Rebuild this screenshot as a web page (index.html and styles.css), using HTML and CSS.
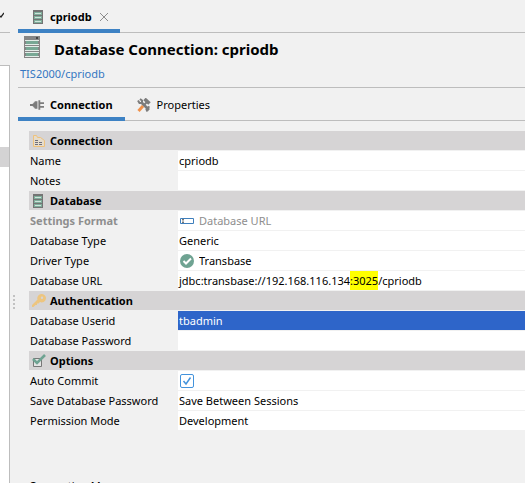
FILE: index.html
```html
<!DOCTYPE html>
<html lang="en">
<head>
<meta charset="utf-8">
<title>Database Connection: cpriodb</title>
<link rel="stylesheet" href="styles.css">
</head>
<body>
<svg class="sprite" aria-hidden="true">
  <symbol id="server" viewBox="0 0 10 14">
    <path fill="#747474" d="M0 0h10v14H0z"/>
    <path fill="#7fae9b" d="M1 2h8v3H1zM1 6h8v3H1zM1 10h8v3H1z"/>
    <path fill="#cfe3da" d="M2 3h6v1H2zM2 7h6v1H2zM2 11h6v1H2z"/>
  </symbol>
</svg>
<div class="app">
  <aside class="side">
    <div class="side-tab"><svg class="side-check" viewBox="0 0 4 6"><path d="M0 4l1 1 3-4" fill="none" stroke="#222" stroke-width="1.3"/></svg></div>
    <div class="side-tools"></div>
    <div class="tree"><div class="tree-selected"></div></div>
  </aside>
  <div class="splitter"><i></i><i></i><i></i><i></i></div>
  <main class="editor">
    <nav class="file-tabs">
      <div class="file-tab">
        <svg class="icon-server"><use href="#server"/></svg>
        <a href="#editor">cpriodb</a>
        <button class="close" type="button" aria-label="Close"><svg viewBox="0 0 8 8"><path d="M0 0l8 8M8 0L0 8" stroke="#8c8c8c" fill="none"/></svg></button>
      </div>
    </nav>
    <header class="heading" id="editor">
      <div class="title">
        <svg class="title-icon" viewBox="0 0 16 22">
          <path fill="#858585" d="M0 0h16v22H0z"/>
          <path fill="#e3ece8" d="M1 4h14v1H1zM1 8h14v1H1zM1 10h14v1H1zM1 14h14v1H1zM1 16h14v1H1zM1 20h14v1H1z"/>
          <path fill="#78a895" d="M2 5h12v3H2zM2 11h12v3H2zM2 17h12v3H2z"/>
          <path fill="#444" d="M12 1h2v2h-2z"/>
        </svg>
        <h1>Database Connection: cpriodb</h1>
      </div>
      <a class="path" href="#editor">TIS2000/cpriodb</a>
    </header>
    <nav class="tabs">
      <a class="tab active" href="#connection">
        <svg class="icon" viewBox="0 0 15 14"><path fill="#7c7c7c" d="M0 6h3V5h1V4h1V3h3v8H5v-1H4V9H3V8H0zM9 2h2v10H9zM11 4h4v2h-4zM11 8h4v2h-4z"/></svg>
        Connection
      </a>
      <a class="tab" href="#properties">
        <svg class="icon" viewBox="0 0 14 14"><path fill="none" stroke="#7c7c7c" stroke-width="2.6" d="M4 4l8 8"/><path fill="none" stroke="#7c7c7c" stroke-width="2" d="M1 2.500l1.500 2.500H5V2.500L3 1M12.500 8.500l-1.500 1-1.500 2 1 2"/><path stroke="#7c7c7c" stroke-width="3.600" d="M7.500 1l5 4.500"/><path stroke="#7c7c7c" stroke-width="2" d="M10 4L6 8"/><path stroke="#f0914a" stroke-width="3" d="M6 8l-4.500 5"/></svg>
        Properties
      </a>
    </nav>
    <form class="grid" id="connection">
      <h2><svg class="icon" viewBox="0 0 14 14"><path fill="#e6dccb" stroke="#efc27c" d="M1.500 12.500v-11h3l1 2h3l4 3v6z"/><path stroke="#6f6f7c" stroke-dasharray="3 1" d="M3 6.500h4M3 8.500h7M3 10.500h8"/></svg>Connection</h2>
      <div class="row"><label for="name">Name</label><input id="name" type="text" value="cpriodb"></div>
      <div class="row"><label for="notes">Notes</label><input id="notes" type="text"></div>

      <h2><svg class="icon-server"><use href="#server"/></svg>Database</h2>
      <div class="row disabled"><label for="format">Settings Format</label><div class="value"><svg class="icon" viewBox="0 0 14 14"><path fill="#fff" stroke="#3f7fbc" d="M.5 4.500h13v5H.5z"/><path stroke="#777" d="M2 5.500h2M3 5.500v3M2 8.500h2" fill="none"/></svg><select id="format" disabled><option>Database URL</option></select></div></div>
      <div class="row"><label for="type">Database Type</label><select id="type"><option>Generic</option></select></div>
      <div class="row"><label for="driver">Driver Type</label><div class="value"><svg class="icon" viewBox="0 0 14 14"><circle cx="7" cy="7" r="7" fill="#6fa392"/><path d="M3.500 7l2.500 2.500 5-5" fill="none" stroke="#fff" stroke-width="2"/></svg><select id="driver"><option>Transbase</option></select></div></div>
      <div class="row"><span id="url-label">Database URL</span><div class="value url" role="textbox" contenteditable="true" spellcheck="false" aria-labelledby="url-label">jdbc:transbase://192.168.116.134<mark>:3025</mark>/cpriodb</div></div>

      <h2><svg class="icon" viewBox="0 0 14 14"><path fill="#edc57f" fill-rule="evenodd" d="M9.500 0a4.200 4.200 0 1 1-1.500 8L6.500 9.500H5V11H3.500l-2 2H0v-2l5.500-5.500A4.200 4.200 0 0 1 9.500 0zM10 2.500a1.200 1.200 0 1 0 0 2.400 1.200 1.200 0 0 0 0-2.400z"/></svg>Authentication</h2>
      <div class="row selected"><label for="user">Database Userid</label><input id="user" type="text" value="tbadmin"></div>
      <div class="row"><label for="password">Database Password</label><input id="password" type="password"></div>

      <h2><svg class="icon" viewBox="0 0 14 14"><path fill="#e4e4e4" stroke="#777" d="M1.500 4.500h8v8h-8z"/><path d="M1 5l4 4 8-8" fill="none" stroke="#6fa392" stroke-width="2.600"/></svg>Options</h2>
      <div class="row"><label for="auto">Auto Commit</label><div class="value"><input id="auto" type="checkbox" checked></div></div>
      <div class="row"><label for="save">Save Database Password</label><select id="save"><option>Save Between Sessions</option></select></div>
      <div class="row"><label for="mode">Permission Mode</label><select id="mode"><option>Development</option></select></div>
    </form>
    <footer class="message">Connection Message</footer>
  </main>
</div>
</body>
</html>
```

FILE: styles.css
```css
* {
  box-sizing: border-box;
}

body {
  margin: 0;
  height: 100vh;
  overflow: hidden;
  background: #f1f1f1;
  color: #000;
  font: 11px/20px "Noto Sans", "Open Sans", sans-serif;
}

a {
  color: inherit;
  text-decoration: none;
}

h1,
h2 {
  margin: 0;
}

.sprite {
  position: absolute;
  width: 0;
  height: 0;
}

.app {
  display: flex;
  height: 100%;
}

.side {
  display: flex;
  flex-direction: column;
  width: 10px;
}

.side-tab {
  height: 33px;
  padding-top: 9px;
  border-bottom: 1px solid #bdbdbd;
}

.side-check {
  display: block;
  width: 4px;
  height: 12px;
}

.side-tools {
  height: 32px;
}

.tree {
  flex: 1;
  padding-top: 81px;
  background: #fff;
  border: solid #bdbdbd;
  border-width: 1px 1px 0 0;
}

.tree-selected {
  height: 20px;
  background: #d4d3d4;
}

.splitter {
  display: flex;
  flex-direction: column;
  gap: 2px;
  width: 8px;
  padding: 295px 0 0 3px;
}

.splitter i {
  width: 2px;
  height: 2px;
  background: #c2c2c2;
}

.editor {
  flex: 1;
  min-width: 0;
}

.icon {
  flex: none;
  width: 14px;
  height: 14px;
}

.icon-server {
  flex: none;
  width: 10px;
  height: 14px;
}

.file-tabs,
.tabs {
  display: flex;
  height: 33px;
  border-bottom: 1px solid #bdbdbd;
}

.file-tab {
  display: flex;
  align-items: center;
  height: 33px;
  padding: 4px 12px 0 15px;
  border-bottom: 4px solid #3d82c4;
  font-weight: bold;
}

.file-tab a {
  margin: 0 8px 0 7px;
}

.close {
  width: 8px;
  height: 8px;
  padding: 0;
  border: 0;
  background: none;
}

.close svg {
  display: block;
  overflow: visible;
}

.heading {
  height: 55px;
  padding: 3px 2px 0;
  border-bottom: 1px solid #bdbdbd;
}

.title {
  display: flex;
  gap: 14px;
  padding-left: 4px;
}

.title-icon {
  width: 16px;
  height: 22px;
}

h1 {
  font-size: 15px;
  line-height: 26px;
}

.path {
  display: block;
  line-height: 24px;
  color: #3577c1;
}

.tab {
  display: flex;
  align-items: center;
  gap: 6px;
  height: 33px;
  padding: 4px 12px 0;
  border-bottom: 4px solid transparent;
}

.tab.active {
  border-color: #3d82c4;
  font-weight: bold;
}

.grid {
  display: grid;
  gap: 1px;
  padding: 10px 0 0 11px;
}

h2 {
  display: flex;
  align-items: center;
  gap: 4px;
  height: 19px;
  padding-left: 3px;
  background: #d6d4d5;
  font-size: 11px;
  line-height: 20px;
}

h2 .icon-server {
  margin: 0 3px 0 1px;
}

.row {
  display: grid;
  grid-template-columns: 148px 1fr;
  height: 19px;
  padding-left: 1px;
}

.row > * {
  height: 19px;
}

.value {
  display: flex;
  align-items: center;
  padding-left: 2px;
  background: #fff;
}

input,
select {
  appearance: none;
  width: 100%;
  margin: 0;
  padding: 0 1px;
  border: 0;
  border-radius: 0;
  outline: 0;
  background: #fff;
  color: inherit;
  font: inherit;
  opacity: 1;
}

.value select {
  height: 19px;
  padding-left: 5px;
}

.url {
  padding-left: 1px;
}

mark {
  height: 19px;
  background: #ff0;
}

.selected input {
  background: #2e65c9;
  color: #fff;
}

.disabled {
  color: #8e8e8e;
}

.disabled label {
  font-weight: bold;
}

input[type="checkbox"] {
  width: 14px;
  height: 14px;
  border: 1px solid #4393dc;
  border-radius: 2px;
  background: #fff url("data:image/svg+xml,%3Csvg xmlns='http://www.w3.org/2000/svg' viewBox='0 0 12 12'%3E%3Cpath d='M2.500 6L5 9l4.500-6.500' fill='none' stroke='%234393dc' stroke-width='1.500'/%3E%3C/svg%3E");
}

.message {
  margin: 46px 0 0 11px;
}
```
